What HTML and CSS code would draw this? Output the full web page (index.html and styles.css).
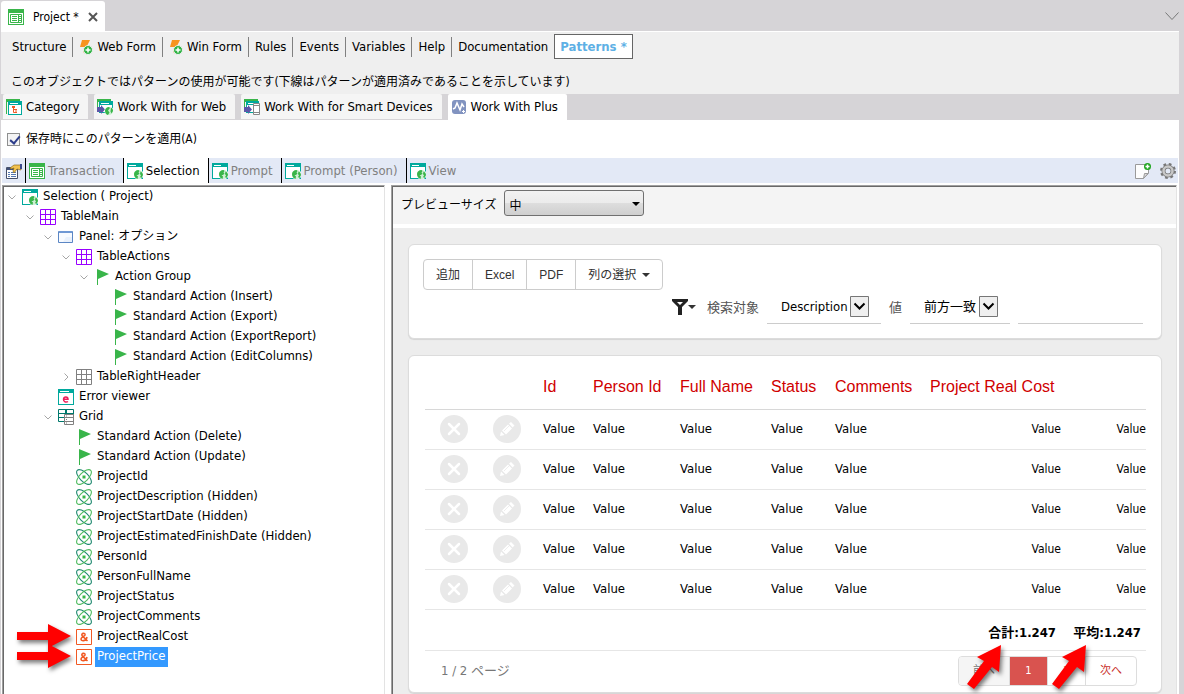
FILE: index.html
```html
<!DOCTYPE html>
<html lang="ja">
<head>
  <meta charset="UTF-8" />
  <meta name="viewport" content="width=device-width, initial-scale=1.0"/>
  <title>Project - Patterns</title>
  <link rel="stylesheet" href="styles.css">
</head>
<body>
  <!-- shared icons -->
  <svg class="sprite" aria-hidden="true">
    <symbol id="i-trn" viewBox="0 0 16 16">
      <path fill="#39b54a" d="M0 0h16v16H0z"/>
      <path fill="#fff" d="M1 4h14v11H1z"/>
      <path fill="none" stroke="#39b54a" d="M2.500 5.500h11v8h-11zM4 7.500h5M4 9.500h5M4 11.500h5M10.500 6v7M11 7.500h3M11 9.500h3M11 11.500h3"/>
    </symbol>
    <symbol id="i-bolt" viewBox="0 0 14 16">
      <path fill="#f7941e" d="M3 1h8L8.500 6H11L4 14l1.500-6H1z"/>
      <circle cx="9" cy="11" r="4.500" fill="#2fb344" stroke="#efefef"/>
      <path stroke="#fff" stroke-width="1.500" d="M6.500 11h5M9 8.500v5"/>
    </symbol>
    <symbol id="i-web" viewBox="0 0 16 16">
      <path fill="#00a99d" d="M0 0h16v16H0z"/>
      <path fill="#fff" d="M1 4h14v11H1zM2 2h7v1H2z"/>
      <circle cx="11.500" cy="11.500" r="5" fill="#fff"/>
      <circle cx="11.500" cy="11.500" r="4.500" fill="#cdeed3"/>
      <path fill="#39b54a" d="M7 11c0-2 2-4 4.500-4l1 1-1 1.500 1 1-1.500 1.500H9.500l1.500 1.500-.5 2.500C8.500 15.500 7 13.500 7 11zM13.500 8.500c1.500.5 2.500 2 2.500 3.500l-1.500 3-1.500-1 1-1.500-1-1.500z"/>
    </symbol>
    <symbol id="i-cat" viewBox="0 0 16 16">
      <path fill="#39b54a" d="M0 0h14v3H0zM0 3h1v12H0z"/>
      <path fill="#00a99d" d="M2 2h14v14H2z"/>
      <path fill="#fff" d="M3 6h12v9H3zM4 4h8v1H4z"/>
      <path fill="none" stroke="#f15a24" d="M7.500 8v5.500H9M7.500 10.500H9"/>
      <path fill="#f15a24" d="M6 7h3v2H6zM9 10h2v1.500H9zM9 12.500h2V14H9z"/>
    </symbol>
    <symbol id="i-wwweb" viewBox="0 0 16 16">
      <path fill="#39b54a" d="M0 0h14v3H0zM0 3h1v7H0z"/>
      <path fill="#00a99d" d="M2 2h14v12H2z"/>
      <path fill="#fff" d="M3 6h12v7H3zM4 4h8v1H4z"/>
      <path fill="#5c57a8" d="M0 8h4V6l4 4.500L4 15v-2H0z"/>
      <circle cx="12" cy="12" r="4.500" fill="#fff"/>
      <circle cx="12" cy="12" r="4" fill="#cdeed3"/>
      <path fill="#39b54a" d="M8 11.500C8.500 9.500 10 8 12 8l1 1-2 2.500 1.500 2L11 16c-2-.5-3-2-3-4.500zM14 8.500c1.500 1 2 2 2 3.500l-1.500 2.500-1-2z"/>
    </symbol>
    <symbol id="i-wwsd" viewBox="0 0 16 16">
      <path fill="#39b54a" d="M0 0h14v3H0zM0 3h1v7H0z"/>
      <path fill="#00a99d" d="M2 2h13v12H2z"/>
      <path fill="#fff" d="M3 6h11v7H3zM4 4h8v1H4z"/>
      <path fill="#5c57a8" d="M0 8h4V6l4 4.500L4 15v-2H0z"/>
      <path fill="#fff" stroke="#888" d="M9.500 4.500h6v11h-6z"/>
      <path stroke="#888" d="M10 6.500h5M10 13.500h5"/>
    </symbol>
    <symbol id="i-plus" viewBox="0 0 16 16">
      <rect x="1" y="1" width="14" height="14" rx="3" fill="#8193c0"/>
      <path fill="none" stroke="#fff" stroke-width="1.500" d="M2 10l2-1 2-5 3 7 2-6 2 3"/>
      <path stroke="#fff" d="M11 12.500h3M12.500 11v3"/>
    </symbol>
    <symbol id="i-props" viewBox="0 0 16 16">
      <path fill="#fff" stroke="#46506a" d="M.5 4.500h11v11H.5z"/>
      <path fill="#3f4f78" d="M1 5h10v2H1z"/>
      <path stroke="#5577b0" d="M2 9.500h2M5 9.500h5M2 11.500h2M5 11.500h5M2 13.500h2M5 13.500h5"/>
      <path fill="#f2c14e" stroke="#8d6b1c" stroke-width=".7" d="M4 5l4-3h7v5l-4-1-3 4-1-2 1-3-3 1z"/>
      <path fill="#3c4a8c" d="M14 1h2v5h-2z"/>
    </symbol>
    <symbol id="i-tblmain" viewBox="0 0 16 16">
      <path fill="#fff" stroke="#9900ff" d="M.5 .5h15v15H.5zM5.500 0v16M10.500 0v16M0 5.500h16M0 10.500h16"/>
    </symbol>
    <symbol id="i-tbl" viewBox="0 0 16 16">
      <path fill="#fff" stroke="#808080" d="M.5 .5h15v15H.5zM5.500 0v16M10.500 0v16M0 5.500h16M0 10.500h16"/>
    </symbol>
    <symbol id="i-panel" viewBox="0 0 16 16">
      <path fill="#f8fbff" stroke="#5b86c4" d="M.5 2.500h14v11H.5z"/>
      <path fill="#6f98d4" d="M1 2h13v2H1z"/>
      <path fill="#e9f1fc" d="M8 8h6v5H5z"/>
    </symbol>
    <symbol id="i-flag" viewBox="0 0 16 16">
      <path fill="#39b54a" d="M3 0l12 5L4 10v6H3z"/>
    </symbol>
    <symbol id="i-err" viewBox="0 0 16 16">
      <path fill="#00a99d" d="M0 0h16v16H0z"/>
      <path fill="#fff" d="M1 4h14v11H1zM2 2h9v1H2z"/>
      <path fill="none" stroke="#ed1e5a" stroke-width="1.500" d="M5.500 10.300h4.500c0-3-4.300-3-4.500 0-.1 3 3 3.300 4.500 2.200"/>
    </symbol>
    <symbol id="i-grid" viewBox="0 0 16 16">
      <path fill="#fff" stroke="#00786c" d="M.5 .5h15v12H.5zM0 4.500h16M0 8.500h16M7.500 0v12M8.500 0v12"/>
      <path fill="#fff" stroke="#808080" d="M6.500 5.500h9v10h-9zM6 8.500h10M6 12.500h10"/>
      <path stroke="#808080" d="M8 7h1M8 10.500h1M8 14h1"/>
    </symbol>
    <symbol id="i-atom" viewBox="0 0 16 16">
      <ellipse cx="8" cy="8" rx="9.500" ry="4.300" transform="rotate(45 8 8)" fill="none" stroke="#1f8a70" stroke-width="1.100"/>
      <ellipse cx="8" cy="8" rx="9.500" ry="4.300" transform="rotate(-45 8 8)" fill="none" stroke="#4dbb5e" stroke-width="1.100"/>
      <path fill="#39b54a" d="M6.500 6.500h3v3h-3z"/>
    </symbol>
    <symbol id="i-var" viewBox="0 0 16 16">
      <path fill="#fff" stroke="#f15a24" d="M.5 .5h15v15H.5z"/>
      <path fill="none" stroke="#f15a24" stroke-width="1.600" d="M11.500 12L6 6.500C5 4 9.500 3.600 9 6 8.500 7.500 5 8 5 10c0 2.500 5 2.500 6-2"/>
    </symbol>
    <symbol id="i-open" viewBox="0 0 8 8">
      <path fill="none" stroke="#a6a6a6" d="M.5 2.500L4 6l3.500-3.500"/>
    </symbol>
    <symbol id="i-closed" viewBox="0 0 8 8">
      <path fill="none" stroke="#a6a6a6" d="M2.500 .5L6 4 2.500 7.500"/>
    </symbol>
    <symbol id="i-del" viewBox="0 0 28 28">
      <circle cx="14" cy="14" r="14" fill="#e9e9e9"/>
      <path stroke="#fff" stroke-width="2.500" stroke-linecap="round" d="M9 9l10 10M19 9L9 19"/>
    </symbol>
    <symbol id="i-edit" viewBox="0 0 28 28">
      <circle cx="14" cy="14" r="14" fill="#e9e9e9"/>
      <path fill="#fff" d="M7 21l1-4.500 3.500 3.500zM9 15.500l6-6 4 4-6 6zM16 8.500L18 7l3.500 3.500-2 2z"/>
      <path stroke="#e9e9e9" stroke-width=".8" d="M11 16l6-6"/>
    </symbol>
    <symbol id="i-drop" viewBox="0 0 19 21">
      <path fill="#efefef" stroke="#767676" d="M.5 .5h18v20H.5z"/>
      <path fill="none" stroke="#000" stroke-width="2" d="M4.500 7.500l5 5 5-5"/>
    </symbol>
    <symbol id="i-arrow" viewBox="0 0 56 26">
      <path fill="#f00" d="M0 9h31V1l23 12-23 12v-8H0z"/>
    </symbol>
    <symbol id="i-arrow-up" viewBox="0 0 34 44">
      <path fill="#f00" d="M34 0l-2 27-7-5L7 44 0 39l17-23-7-4z"/>
    </symbol>
  </svg>

  <header class="doc-tabs">
    <div class="doc-tab">
      <svg class="icon"><use href="#i-trn"/></svg>
      <span>Project *</span>
      <button class="close" aria-label="Close"><svg viewBox="0 0 10 10"><path d="M1 1l8 8M9 1L1 9"/></svg></button>
    </div>
    <button class="doc-list" aria-label="Open documents"><svg viewBox="0 0 14 9"><path d="M.5 .5L7 7.500l6.500-7"/></svg></button>
  </header>

  <section class="parts">
    <nav class="part-menu">
      <a href="#">Structure</a>
      <a href="#"><svg class="bolt"><use href="#i-bolt"/></svg>Web Form</a>
      <a href="#"><svg class="bolt"><use href="#i-bolt"/></svg>Win Form</a>
      <a href="#">Rules</a>
      <a href="#">Events</a>
      <a href="#">Variables</a>
      <a href="#">Help</a>
      <a href="#">Documentation</a>
      <a href="#" class="current">Patterns *</a>
    </nav>
    <p class="jp">このオブジェクトではパターンの使用が可能です(下線はパターンが適用済みであることを示しています)</p>
  </section>

  <nav class="pattern-tabs">
    <a href="#"><svg class="icon"><use href="#i-cat"/></svg>Category</a>
    <a href="#"><svg class="icon"><use href="#i-wwweb"/></svg>Work With for Web</a>
    <a href="#"><svg class="icon"><use href="#i-wwsd"/></svg>Work With for Smart Devices</a>
    <a href="#" class="current"><svg class="icon"><use href="#i-plus"/></svg>Work With Plus</a>
  </nav>

  <main class="workspace">
    <label class="apply jp"><input type="checkbox" checked> 保存時にこのパターンを適用(A)</label>

    <div class="toolbar">
      <button class="tool props" aria-label="Properties"><svg class="icon"><use href="#i-props"/></svg></button>
      <button class="tool"><svg class="icon"><use href="#i-trn"/></svg>Transaction</button>
      <button class="tool active"><svg class="icon"><use href="#i-web"/></svg>Selection</button>
      <button class="tool"><svg class="icon"><use href="#i-web"/></svg>Prompt</button>
      <button class="tool"><svg class="icon"><use href="#i-web"/></svg>Prompt (Person)</button>
      <button class="tool"><svg class="icon"><use href="#i-web"/></svg>View</button>
      <div class="tool-right">
        <button aria-label="New">
          <svg class="icon" viewBox="0 0 16 16"><path fill="#fdfdfd" stroke="#9a9a9a" d="M.5 1.500h13v9l-5 5h-8z"/><path fill="#ddd" stroke="#9a9a9a" d="M13 10.500H9.500l-1 5z"/><circle cx="12.500" cy="3.500" r="3.500" fill="#1fa51f"/><path stroke="#fff" stroke-width="1.500" d="M10.500 3.500h4M12.500 1.500v4"/></svg>
        </button>
        <button aria-label="Settings">
          <svg class="icon" viewBox="0 0 16 16"><circle cx="8" cy="8" r="6.500" fill="none" stroke="#777" stroke-width="3" stroke-dasharray="2.550"/><circle cx="8" cy="8" r="4.500" fill="none" stroke="#777" stroke-width="4"/><circle cx="8" cy="8" r="4.500" fill="none" stroke="#c8c8c8" stroke-width="2.500"/></svg>
        </button>
      </div>
    </div>

    <div class="panes">
      <section class="tree">
        <ul>
          <li>
            <div class="node"><svg class="twisty"><use href="#i-open"/></svg><svg class="icon"><use href="#i-web"/></svg><span>Selection ( Project)</span></div>
            <ul>
              <li>
                <div class="node"><svg class="twisty"><use href="#i-open"/></svg><svg class="icon"><use href="#i-tblmain"/></svg><span>TableMain</span></div>
                <ul>
                  <li>
                    <div class="node"><svg class="twisty"><use href="#i-open"/></svg><svg class="icon"><use href="#i-panel"/></svg><span>Panel: <span class="jp">オプション</span></span></div>
                    <ul>
                      <li>
                        <div class="node"><svg class="twisty"><use href="#i-open"/></svg><svg class="icon"><use href="#i-tblmain"/></svg><span>TableActions</span></div>
                        <ul>
                          <li>
                            <div class="node"><svg class="twisty"><use href="#i-open"/></svg><svg class="icon"><use href="#i-flag"/></svg><span>Action Group</span></div>
                            <ul>
                              <li><div class="node leaf"><svg class="icon"><use href="#i-flag"/></svg><span>Standard Action (Insert)</span></div></li>
                              <li><div class="node leaf"><svg class="icon"><use href="#i-flag"/></svg><span>Standard Action (Export)</span></div></li>
                              <li><div class="node leaf"><svg class="icon"><use href="#i-flag"/></svg><span>Standard Action (ExportReport)</span></div></li>
                              <li><div class="node leaf"><svg class="icon"><use href="#i-flag"/></svg><span>Standard Action (EditColumns)</span></div></li>
                            </ul>
                          </li>
                        </ul>
                      </li>
                      <li><div class="node"><svg class="twisty"><use href="#i-closed"/></svg><svg class="icon"><use href="#i-tbl"/></svg><span>TableRightHeader</span></div></li>
                    </ul>
                  </li>
                  <li><div class="node leaf"><svg class="icon"><use href="#i-err"/></svg><span>Error viewer</span></div></li>
                  <li>
                    <div class="node"><svg class="twisty"><use href="#i-open"/></svg><svg class="icon"><use href="#i-grid"/></svg><span>Grid</span></div>
                    <ul>
                      <li><div class="node leaf"><svg class="icon"><use href="#i-flag"/></svg><span>Standard Action (Delete)</span></div></li>
                      <li><div class="node leaf"><svg class="icon"><use href="#i-flag"/></svg><span>Standard Action (Update)</span></div></li>
                      <li><div class="node leaf"><svg class="icon"><use href="#i-atom"/></svg><span>ProjectId</span></div></li>
                      <li><div class="node leaf"><svg class="icon"><use href="#i-atom"/></svg><span>ProjectDescription (Hidden)</span></div></li>
                      <li><div class="node leaf"><svg class="icon"><use href="#i-atom"/></svg><span>ProjectStartDate (Hidden)</span></div></li>
                      <li><div class="node leaf"><svg class="icon"><use href="#i-atom"/></svg><span>ProjectEstimatedFinishDate (Hidden)</span></div></li>
                      <li><div class="node leaf"><svg class="icon"><use href="#i-atom"/></svg><span>PersonId</span></div></li>
                      <li><div class="node leaf"><svg class="icon"><use href="#i-atom"/></svg><span>PersonFullName</span></div></li>
                      <li><div class="node leaf"><svg class="icon"><use href="#i-atom"/></svg><span>ProjectStatus</span></div></li>
                      <li><div class="node leaf"><svg class="icon"><use href="#i-atom"/></svg><span>ProjectComments</span></div></li>
                      <li><div class="node leaf"><svg class="icon"><use href="#i-var"/></svg><span>ProjectRealCost</span><svg class="arrow"><use href="#i-arrow"/></svg></div></li>
                      <li><div class="node leaf selected"><svg class="icon"><use href="#i-var"/></svg><span>ProjectPrice</span><svg class="arrow"><use href="#i-arrow"/></svg></div></li>
                    </ul>
                  </li>
                </ul>
              </li>
            </ul>
          </li>
        </ul>
      </section>

      <section class="preview">
        <div class="size-bar jp">
          <label for="size">プレビューサイズ</label>
          <div class="size-select">
            <select id="size"><option>中</option></select>
            <svg viewBox="0 0 8 4"><path d="M0 0h8L4 4z"/></svg>
          </div>
        </div>

        <div class="canvas">
          <div class="card filters">
            <div class="btn-group">
              <button>追加</button>
              <button>Excel</button>
              <button>PDF</button>
              <button>列の選択 <svg class="caret" viewBox="0 0 8 4"><path d="M0 0h8L4 4z"/></svg></button>
            </div>
            <div class="filter-row">
              <button class="filter-btn" aria-label="Filter">
                <svg class="funnel" viewBox="0 0 16 16"><path fill="#222" fill-rule="evenodd" d="M0 0h16v2l-6 6v8H6V8L0 2zM5 3l3 3 3-3z"/></svg>
                <svg class="caret" viewBox="0 0 8 4"><path d="M0 0h8L4 4z"/></svg>
              </button>
              <label for="field">検索対象</label>
              <div class="field">
                <select id="field"><option>Description</option></select>
                <svg class="drop"><use href="#i-drop"/></svg>
              </div>
              <label for="operator">値</label>
              <div class="field">
                <select id="operator"><option>前方一致</option></select>
                <svg class="drop"><use href="#i-drop"/></svg>
              </div>
              <input type="text" class="value" aria-label="値">
            </div>
          </div>

          <div class="card list">
            <table>
              <colgroup>
                <col class="c-del"><col class="c-edit"><col class="c-id"><col class="c-person"><col class="c-name"><col class="c-status"><col class="c-comments"><col class="c-cost"><col>
              </colgroup>
              <thead>
                <tr><th></th><th></th><th>Id</th><th>Person Id</th><th>Full Name</th><th>Status</th><th>Comments</th><th>Project Real Cost</th><th></th></tr>
              </thead>
              <tbody>
                <tr>
                  <td><svg class="round"><use href="#i-del"/></svg></td><td><svg class="round"><use href="#i-edit"/></svg></td>
                  <td>Value</td><td>Value</td><td>Value</td><td>Value</td><td>Value</td><td class="num">Value</td><td class="num">Value</td>
                </tr>
                <tr>
                  <td><svg class="round"><use href="#i-del"/></svg></td><td><svg class="round"><use href="#i-edit"/></svg></td>
                  <td>Value</td><td>Value</td><td>Value</td><td>Value</td><td>Value</td><td class="num">Value</td><td class="num">Value</td>
                </tr>
                <tr>
                  <td><svg class="round"><use href="#i-del"/></svg></td><td><svg class="round"><use href="#i-edit"/></svg></td>
                  <td>Value</td><td>Value</td><td>Value</td><td>Value</td><td>Value</td><td class="num">Value</td><td class="num">Value</td>
                </tr>
                <tr>
                  <td><svg class="round"><use href="#i-del"/></svg></td><td><svg class="round"><use href="#i-edit"/></svg></td>
                  <td>Value</td><td>Value</td><td>Value</td><td>Value</td><td>Value</td><td class="num">Value</td><td class="num">Value</td>
                </tr>
                <tr>
                  <td><svg class="round"><use href="#i-del"/></svg></td><td><svg class="round"><use href="#i-edit"/></svg></td>
                  <td>Value</td><td>Value</td><td>Value</td><td>Value</td><td>Value</td><td class="num">Value</td><td class="num">Value</td>
                </tr>
              </tbody>
              <tfoot>
                <tr>
                  <td colspan="7"></td>
                  <td><div class="total">合計:1.247<svg class="arrow-up"><use href="#i-arrow-up"/></svg></div></td>
                  <td><div class="total">平均:1.247<svg class="arrow-up"><use href="#i-arrow-up"/></svg></div></td>
                </tr>
              </tfoot>
            </table>
            <div class="list-footer">
              <span class="page-info">1 / 2 ページ</span>
              <nav class="pager">
                <a href="#" class="disabled">前へ</a>
                <a href="#" class="current">1</a>
                <a href="#">2</a>
                <a href="#">次へ</a>
              </nav>
            </div>
          </div>
        </div>
      </section>
    </div>
  </main>
</body>
</html>
```
FILE: styles.css
```css
* {
  box-sizing: border-box;
}

body {
  margin: 0;
  padding: 0 5px 0 1px;
  min-height: 100vh;
  display: flex;
  flex-direction: column;
  background: #d6d4d7;
  color: #000;
  font-family: "DejaVu Sans Condensed", "Noto Sans", "Noto Sans CJK JP", sans-serif;
  font-size: 13px;
  line-height: 18px;
}

a {
  color: inherit;
  text-decoration: none;
}

button, input, select {
  margin: 0;
  padding: 0;
  border: none;
  border-radius: 0;
  background: none;
  color: inherit;
  font: inherit;
}

svg {
  display: block;
  flex: none;
}

ul {
  list-style: none;
  margin: 0;
  padding: 0;
}

.sprite {
  position: absolute;
  width: 0;
  height: 0;
}

.icon {
  width: 16px;
  height: 16px;
}

.jp {
  font-family: "DejaVu Sans Condensed", "Noto Sans CJK JP", sans-serif;
  font-size: 12px;
}

/* document tabs */
.doc-tabs {
  display: flex;
  justify-content: space-between;
  align-items: center;
  height: 31px;
  padding-top: 1px;
}

.doc-tab {
  display: flex;
  align-items: center;
  gap: 9px;
  height: 30px;
  padding: 2px 7px 0;
  background: #fff;
  border-radius: 3px 3px 0 0;
  font-size: 12px;
}

.close svg {
  width: 10px;
  height: 10px;
  fill: none;
  stroke: #555;
  stroke-width: 2;
}

.doc-list svg {
  width: 14px;
  height: 9px;
  fill: none;
  stroke: #777;
}

/* object parts */
.parts {
  height: 63px;
  padding: 2px 5px 0;
  background: #efefef;
  border-top: 1px solid #fff;
}

.part-menu {
  display: flex;
  align-items: center;
}

.part-menu a {
  display: flex;
  align-items: center;
  gap: 4px;
  height: 20px;
  padding: 0 6px;
  border-left: 1px solid #808080;
  white-space: nowrap;
}

.part-menu a:first-child {
  border-left: none;
}

.part-menu .bolt {
  width: 14px;
  height: 16px;
}

.part-menu a.current {
  height: 25px;
  padding: 0 5px;
  border: 1px solid #666;
  background: #fff;
  color: #5eb0e5;
  font-weight: bold;
}

.parts p {
  margin: 14px 5px 0;
}

/* pattern tabs */
.pattern-tabs {
  display: flex;
  gap: 6px;
  height: 26px;
  padding-left: 2px;
}

.pattern-tabs a {
  display: flex;
  align-items: center;
  gap: 4px;
  height: 25px;
  padding: 0 9px 0 3px;
  background: #f5f5f5;
  border-radius: 2px 2px 0 0;
}

.pattern-tabs .current {
  height: 26px;
  background: #fff;
}

/* workspace */
.workspace {
  flex: 1;
  display: flex;
  flex-direction: column;
  padding: 0 1px;
  background: #fff;
}

.apply {
  display: flex;
  align-items: center;
  gap: 6px;
  height: 38px;
  padding-left: 5px;
}

.apply input {
  appearance: none;
  width: 13px;
  height: 13px;
  border: 1px solid #8e8f8f;
  background: #f4f4f4;
  position: relative;
}

.apply input:checked::after {
  content: "";
  position: absolute;
  left: 4px;
  top: 0;
  width: 4px;
  height: 8px;
  border: solid #2d3d8b;
  border-width: 0 2px 2px 0;
  transform: rotate(40deg);
}

.toolbar {
  display: flex;
  align-items: center;
  height: 25px;
  margin-bottom: 2px;
  background: #e3e9f6;
}

.tool {
  display: flex;
  align-items: center;
  gap: 3px;
  height: 25px;
  padding: 0 8px 0 3px;
  color: #808080;
}

.tool + .tool {
  border-left: 1px solid #000;
}

.tool.props {
  padding: 0 3px 0 4px;
}

.tool.active {
  background: #fff;
  color: #000;
}

.tool-right {
  display: flex;
  gap: 9px;
  margin-left: auto;
  padding-right: 2px;
}

.panes {
  flex: 1;
  display: grid;
  grid-template-columns: 383px 1fr;
  gap: 6px;
}

.tree, .preview {
  padding: 1px 0 0 1px;
  border: 1px solid #a0a0a0;
  border-right-color: #e3e3e3;
  border-bottom: none;
  box-shadow: inset 1px 1px #696969;
}

.preview {
  margin-right: 1px;
}

/* tree */
.tree ul ul {
  padding-left: 18px;
}

.node {
  position: relative;
  display: flex;
  align-items: center;
  height: 20px;
  padding-left: 4px;
}

.node.leaf {
  padding-left: 18px;
}

.node span {
  padding: 0 3px 2px 2px;
}

.node .jp {
  padding: 0;
}

.twisty {
  width: 8px;
  height: 8px;
  margin-right: 6px;
}

.node .icon {
  margin-right: 3px;
}

.selected span {
  background: #3399ff;
  color: #fff;
}

.arrow {
  position: absolute;
  left: -41px;
  top: -4px;
  width: 56px;
  height: 26px;
  filter: drop-shadow(2px 3px 2px rgba(0,0,0,0.5));
}

/* preview */
.size-bar {
  display: flex;
  gap: 8px;
  height: 37px;
  padding: 3px 8px 0;
  line-height: 30px;
  background: #f4f4f4;
}

.size-select {
  position: relative;
  width: 140px;
  height: 26px;
}

.size-select select {
  appearance: none;
  width: 100%;
  height: 100%;
  padding-left: 4px;
  border: 1px solid #707070;
  border-radius: 3px;
  background: linear-gradient(#f2f2f2, #ebebeb 50%, #dddddd 51%, #cfcfcf);
}

.size-select svg {
  position: absolute;
  right: 4px;
  top: 12px;
  width: 8px;
  height: 4px;
}

.canvas {
  margin-top: 4px;
  padding: 16px 14px 2px 15px;
  background: #ededed;
}

.card {
  background: #fff;
  border: 1px solid #dcdcdc;
  border-radius: 6px;
  box-shadow: 0 1px 1px rgba(0,0,0,0.1);
}

.filters {
  padding: 14px 18px 14px 14px;
  margin-bottom: 16px;
}

.btn-group {
  display: flex;
  width: max-content;
  border: 1px solid #ccc;
  border-radius: 4px;
  font-family: "Liberation Sans", "Noto Sans CJK JP", sans-serif;
  font-size: 12px;
  color: #333;
}

.btn-group button {
  display: flex;
  align-items: center;
  gap: 6px;
  height: 29px;
  padding: 0 12px;
}

.btn-group button + button {
  border-left: 1px solid #ccc;
}

.caret {
  width: 8px;
  height: 4px;
  fill: #333;
}

.filter-row {
  display: flex;
  justify-content: flex-end;
  align-items: center;
  gap: 8px;
  margin-top: 3px;
  color: #555;
}

.filter-row label {
  padding-bottom: 2px;
}

.filter-btn {
  display: flex;
  align-items: center;
  margin-right: 3px;
  padding-bottom: 4px;
}

.funnel {
  width: 16px;
  height: 16px;
}

.field {
  position: relative;
  height: 31px;
  padding: 0 12px 0 14px;
  border-bottom: 1px solid #ccc;
}

.field select {
  appearance: none;
  height: 28px;
  padding-right: 21px;
  color: #000;
}

.drop {
  position: absolute;
  right: 12px;
  top: 3px;
  width: 19px;
  height: 21px;
  pointer-events: none;
}

.value {
  width: 125px;
  height: 31px;
  border-bottom: 1px solid #ccc;
}

/* list */
.list {
  padding: 8px 15px 0 16px;
}

table {
  width: 100%;
  table-layout: fixed;
  border-collapse: collapse;
}

.c-del { width: 53px; }
.c-edit { width: 65px; }
.c-id { width: 50px; }
.c-person { width: 87px; }
.c-name { width: 91px; }
.c-status { width: 64px; }
.c-comments { width: 95px; }
.c-cost { width: 131px; }

th, td {
  height: 40px;
  padding: 0;
  border-bottom: 1px solid #e6e6e6;
  text-align: left;
}

th {
  height: 45px;
  padding-top: 2px;
  border-color: #d8d8d8;
  color: #d00000;
  font-family: "Liberation Sans", sans-serif;
  font-size: 16px;
  font-weight: normal;
}

td.num {
  font-size: 12px;
  text-align: right;
}

.round {
  width: 28px;
  height: 28px;
  margin-left: 15px;
}

tfoot td {
  height: 41px;
  padding-top: 6px;
}

.total {
  position: relative;
  padding-right: 5px;
  font-weight: bold;
  text-align: right;
}

.arrow-up {
  position: absolute;
  right: 60px;
  top: 21px;
  width: 34px;
  height: 44px;
  z-index: 1;
  filter: drop-shadow(2px 3px 2px rgba(0,0,0,0.5));
}

.list-footer {
  display: flex;
  justify-content: space-between;
  align-items: center;
  height: 41px;
  padding: 0 9px 0 16px;
}

.page-info {
  color: #777;
}

.pager {
  display: flex;
  border: 1px solid #ddd;
  border-radius: 4px;
  overflow: hidden;
  font-size: 11px;
  color: #c9302c;
}

.pager a {
  min-width: 38px;
  height: 28px;
  padding: 0 14px;
  line-height: 28px;
  text-align: center;
}

.pager a + a {
  border-left: 1px solid #ddd;
}

.pager .disabled {
  background: #f5f5f5;
  color: #777;
}

.pager .current {
  background: #d9534f;
  color: #fff;
}
```
